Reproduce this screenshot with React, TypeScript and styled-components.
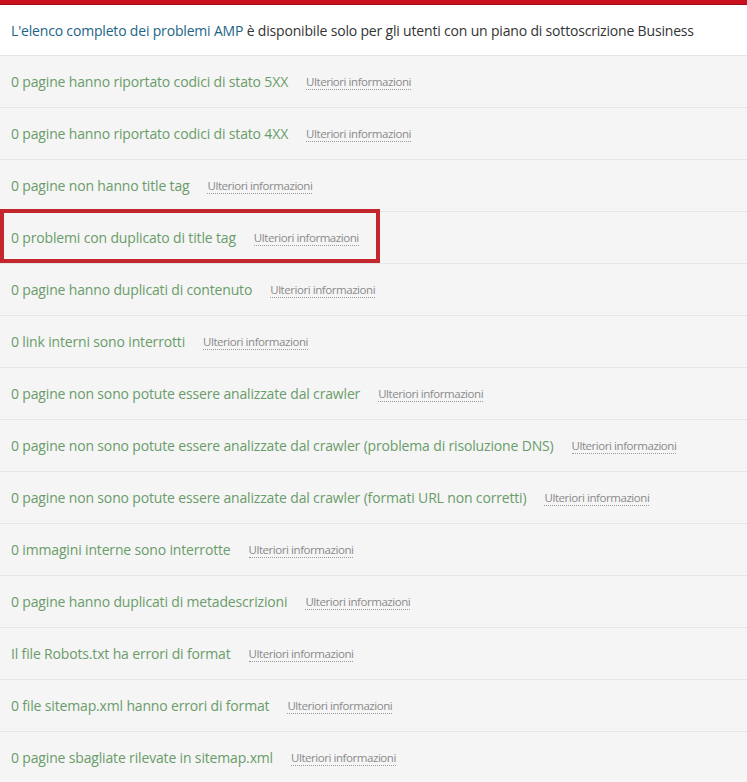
import React from "react";
import styled, { createGlobalStyle } from "styled-components";

const GlobalStyle = createGlobalStyle`
  html, body {
    margin: 0;
    padding: 0;
    background: #ffffff;
  }
  body {
    font-family: "Open Sans", "Noto Sans", sans-serif;
  }
`;

const Page = styled.div`
  width: 747px;
  height: 782px;
  overflow: hidden;
  background: #f5f5f5;
`;

const TopBar = styled.div`
  height: 4px;
  background: #c8101e;
  border-bottom: 1px solid #9e0d17;
`;

const Notice = styled.div`
  height: 50px;
  display: flex;
  align-items: center;
  padding: 0 11px;
  background: #ffffff;
  border-bottom: 1px solid #e6e6e6;
  font-size: 14px;
  letter-spacing: -0.18px;
  color: #333333;
  white-space: nowrap;
`;

const NoticeLink = styled.span`
  color: #1b6584;
`;

const List = styled.div`
  display: flex;
  flex-direction: column;
`;

const Row = styled.div`
  position: relative;
  height: 51px;
  display: flex;
  align-items: center;
  gap: 18px;
  padding: 0 11px;
  border-bottom: 1px solid #e6e6e6;
  white-space: nowrap;
`;

const IssueText = styled.span`
  font-size: 14px;
  letter-spacing: -0.16px;
  color: #6a9c6a;
`;

const MoreInfo = styled.span`
  font-size: 11.5px;
  color: #8a8a8a;
  letter-spacing: -0.44px;
  border-bottom: 1px dotted #9a9a9a;
  line-height: 14px;
  margin-top: 2px;
`;

const Highlight = styled.div`
  position: absolute;
  left: 0;
  top: -3px;
  width: 380px;
  height: 54px;
  box-sizing: border-box;
  border: 4px solid #c4262e;
  pointer-events: none;
`;

const issues: { text: string; marked?: boolean }[] = [
  { text: "0 pagine hanno riportato codici di stato 5XX" },
  { text: "0 pagine hanno riportato codici di stato 4XX" },
  { text: "0 pagine non hanno title tag" },
  { text: "0 problemi con duplicato di title tag", marked: true },
  { text: "0 pagine hanno duplicati di contenuto" },
  { text: "0 link interni sono interrotti" },
  { text: "0 pagine non sono potute essere analizzate dal crawler" },
  { text: "0 pagine non sono potute essere analizzate dal crawler (problema di risoluzione DNS)" },
  { text: "0 pagine non sono potute essere analizzate dal crawler (formati URL non corretti)" },
  { text: "0 immagini interne sono interrotte" },
  { text: "0 pagine hanno duplicati di metadescrizioni" },
  { text: "Il file Robots.txt ha errori di format" },
  { text: "0 file sitemap.xml hanno errori di format" },
  { text: "0 pagine sbagliate rilevate in sitemap.xml" },
];

export default function App() {
  return (
    <Page>
      <GlobalStyle />
      <TopBar />
      <Notice>
        <NoticeLink>L'elenco completo dei problemi AMP</NoticeLink>
        &nbsp;è disponibile solo per gli utenti con un piano di sottoscrizione Business
      </Notice>
      <List>
        {issues.map((issue) => (
          <Row key={issue.text}>
            <IssueText>{issue.text}</IssueText>
            <MoreInfo>Ulteriori informazioni</MoreInfo>
            {issue.marked && <Highlight />}
          </Row>
        ))}
      </List>
    </Page>
  );
}
